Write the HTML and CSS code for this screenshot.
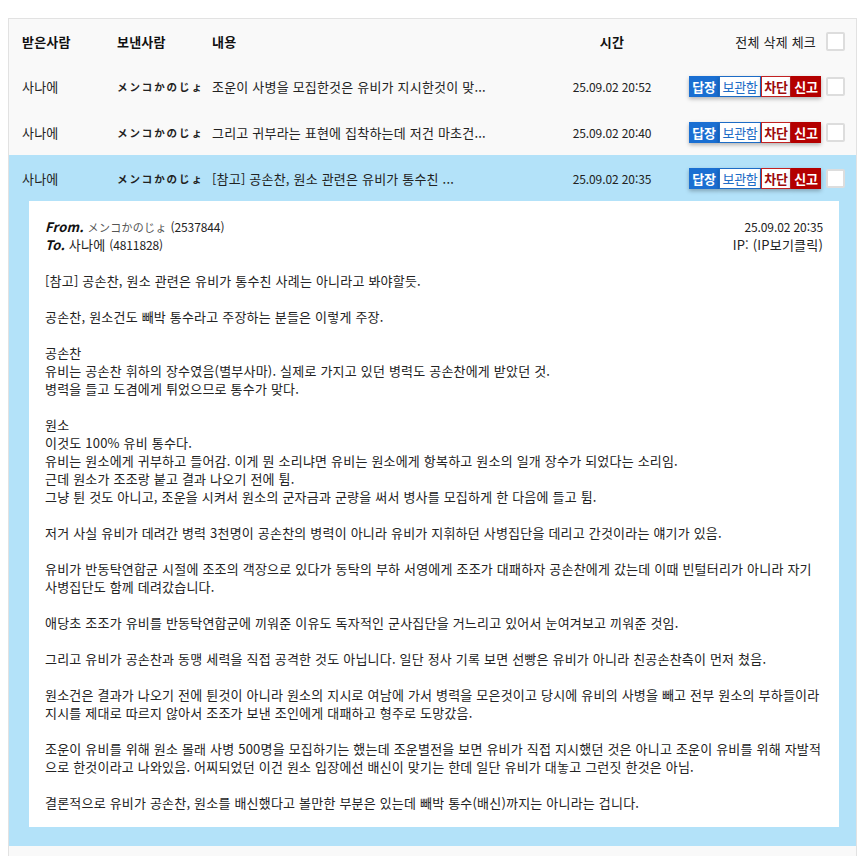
FILE: index.html
```html
<!DOCTYPE html>
<html lang="ko">
<head>
<meta charset="utf-8">
<title>쪽지함</title>
<link rel="stylesheet" href="styles.css">
</head>
<body>
<div class="inbox">
  <div class="row head">
    <div class="c-to">받은사람</div>
    <div class="c-from">보낸사람</div>
    <div class="c-subj">내용</div>
    <div class="c-time">시간</div>
    <div class="c-all">전체 삭제 체크</div>
    <span class="chk"></span>
  </div>

  <div class="row">
    <div class="c-to">사나에</div>
    <div class="c-from jp">メンコかのじょ</div>
    <div class="c-subj">조운이 사병을 모집한것은 유비가 지시한것이 맞...</div>
    <div class="c-time num">25.09.02 20:52</div>
    <div class="c-act"><span class="btn reply">답장</span><span class="btn keep">보관함</span><span class="btn block">차단</span><span class="btn report">신고</span></div>
    <span class="chk"></span>
  </div>

  <div class="row">
    <div class="c-to">사나에</div>
    <div class="c-from jp">メンコかのじょ</div>
    <div class="c-subj">그리고 귀부라는 표현에 집착하는데 저건 마초건...</div>
    <div class="c-time num">25.09.02 20:40</div>
    <div class="c-act"><span class="btn reply">답장</span><span class="btn keep">보관함</span><span class="btn block">차단</span><span class="btn report">신고</span></div>
    <span class="chk"></span>
  </div>

  <div class="open">
    <div class="row">
      <div class="c-to">사나에</div>
      <div class="c-from jp">メンコかのじょ</div>
      <div class="c-subj">[참고] 공손찬, 원소 관련은 유비가 통수친 ...</div>
      <div class="c-time num">25.09.02 20:35</div>
      <div class="c-act"><span class="btn reply">답장</span><span class="btn keep">보관함</span><span class="btn block">차단</span><span class="btn report">신고</span></div>
      <span class="chk"></span>
    </div>

    <div class="card">
      <div class="card-head">
        <div class="who">
          <div><b class="lbl">From.</b> <span class="jp-s">メンコかのじょ</span> <span class="num">(2537844)</span></div>
          <div><b class="lbl">To.</b> 사나에 <span class="num">(4811828)</span></div>
        </div>
        <div class="meta">
          <div class="num">25.09.02 20:35</div>
          <div>IP: (IP보기클릭)</div>
        </div>
      </div>
      <div class="body">
        <p>[참고] 공손찬, 원소 관련은 유비가 통수친 사례는 아니라고 봐야할듯.</p>
        <p>공손찬, 원소건도 빼박 통수라고 주장하는 분들은 이렇게 주장.</p>
        <p>공손찬<br>유비는 공손찬 휘하의 장수였음(별부사마). 실제로 가지고 있던 병력도 공손찬에게 받았던 것.<br>병력을 들고 도겸에게 튀었으므로 통수가 맞다.</p>
        <p>원소<br>이것도 100% 유비 통수다.<br>유비는 원소에게 귀부하고 들어감. 이게 뭔 소리냐면 유비는 원소에게 항복하고 원소의 일개 장수가 되었다는 소리임.<br>근데 원소가 조조랑 붙고 결과 나오기 전에 튐.<br>그냥 튄 것도 아니고, 조운을 시켜서 원소의 군자금과 군량을 써서 병사를 모집하게 한 다음에 들고 튐.</p>
        <p>저거 사실 유비가 데려간 병력 3천명이 공손찬의 병력이 아니라 유비가 지휘하던 사병집단을 데리고 간것이라는 얘기가 있음.</p>
        <p>유비가 반동탁연합군 시절에 조조의 객장으로 있다가 동탁의 부하 서영에게 조조가 대패하자 공손찬에게 갔는데 이때 빈털터리가 아니라 자기<br>사병집단도 함께 데려갔습니다.</p>
        <p>애당초 조조가 유비를 반동탁연합군에 끼워준 이유도 독자적인 군사집단을 거느리고 있어서 눈여겨보고 끼워준 것임.</p>
        <p>그리고 유비가 공손찬과 동맹 세력을 직접 공격한 것도 아닙니다. 일단 정사 기록 보면 선빵은 유비가 아니라 친공손찬측이 먼저 쳤음.</p>
        <p>원소건은 결과가 나오기 전에 튄것이 아니라 원소의 지시로 여남에 가서 병력을 모은것이고 당시에 유비의 사병을 빼고 전부 원소의 부하들이라<br>지시를 제대로 따르지 않아서 조조가 보낸 조인에게 대패하고 형주로 도망갔음.</p>
        <p>조운이 유비를 위해 원소 몰래 사병 500명을 모집하기는 했는데 조운별전을 보면 유비가 직접 지시했던 것은 아니고 조운이 유비를 위해 자발적<br>으로 한것이라고 나와있음. 어찌되었던 이건 원소 입장에선 배신이 맞기는 한데 일단 유비가 대놓고 그런짓 한것은 아님.</p>
        <p>결론적으로 유비가 공손찬, 원소를 배신했다고 볼만한 부분은 있는데 빼박 통수(배신)까지는 아니라는 겁니다.</p>
      </div>
    </div>
  </div>

  <div class="row tail"></div>
</div>
</body>
</html>
```

FILE: styles.css
```css
html, body {
  margin: 0;
  padding: 0;
  background: #ffffff;
}

body {
  padding: 18px 7px 0 8px;
  font-family: "Noto Sans CJK KR", "Noto Sans", sans-serif;
  font-size: 13px;
  color: #222222;
  letter-spacing: 0.2px;
}

.inbox {
  border: 1px solid #e2e2e2;
  border-bottom: none;
  background: #f9f9f9;
}

.row {
  display: flex;
  align-items: center;
  height: 46px;
  padding: 0 11px 0 13px;
}

.row.head {
  height: 44px;
  font-weight: 700;
  color: #111111;
}

.c-to, .c-from {
  width: 95px;
  flex: none;
  white-space: nowrap;
}

.c-subj {
  flex: 1;
  white-space: nowrap;
  overflow: hidden;
}

.c-time {
  width: 110px;
  flex: none;
  text-align: center;
  white-space: nowrap;
}

.num {
  font-size: 12px;
  letter-spacing: -0.1px;
}

.c-all {
  width: 149px;
  text-align: right;
  padding-right: 10px;
  font-weight: 400;
  letter-spacing: 0.2px;
  color: #222222;
}

.c-act {
  margin-left: 22px;
  margin-right: 5px;
  display: flex;
}

.jp {
  font-family: "Noto Sans CJK JP", sans-serif;
  font-size: 10.5px;
  font-weight: 700;
  letter-spacing: 1.9px;
  color: #222222;
}

.btn {
  display: inline-block;
  width: 30px;
  height: 21px;
  line-height: 21px;
  padding: 0;
  text-align: center;
  box-sizing: border-box;
  font-size: 13px;
  font-weight: 700;
  letter-spacing: -0.3px;
  white-space: nowrap;
  box-shadow: 0 2px 4px rgba(0, 0, 0, 0.28);
}

.btn.reply {
  background: #1a6fd2;
  color: #ffffff;
}

.btn.keep {
  width: 42px;
  background: #ffffff;
  color: #1d6cc6;
  border: 1px solid #1d6cc6;
  line-height: 19px;
  font-weight: 400;
}

.btn.block {
  background: #ffffff;
  color: #9c0a0a;
  border: 1px solid #c22222;
  line-height: 19px;
}

.btn.report {
  background: #b40000;
  color: #ffffff;
}

.chk {
  width: 19px;
  height: 19px;
  flex: none;
  box-sizing: border-box;
  border: 2px solid #dddddd;
  border-radius: 2px;
  background: #ffffff;
}

.open {
  background: #b3e2f9;
  padding-bottom: 19px;
}

.card {
  background: #ffffff;
  margin: 0 17px 0 20px;
  padding: 17px 16px 15px 16px;
  line-height: 18px;
}

.card-head {
  display: flex;
  justify-content: space-between;
}

.lbl {
  font-style: italic;
  font-weight: 700;
  color: #111111;
}

.jp-s {
  font-family: "Noto Sans CJK JP", sans-serif;
  font-size: 11px;
  color: #555555;
  letter-spacing: 0.3px;
}

.meta {
  text-align: right;
}

.body {
  margin-top: 18px;
}

.body p {
  margin: 0 0 18px 0;
}

.body p:last-child {
  margin-bottom: 0;
}

.tail {
  height: 20px;
  background: #f9f9f9;
}
```
